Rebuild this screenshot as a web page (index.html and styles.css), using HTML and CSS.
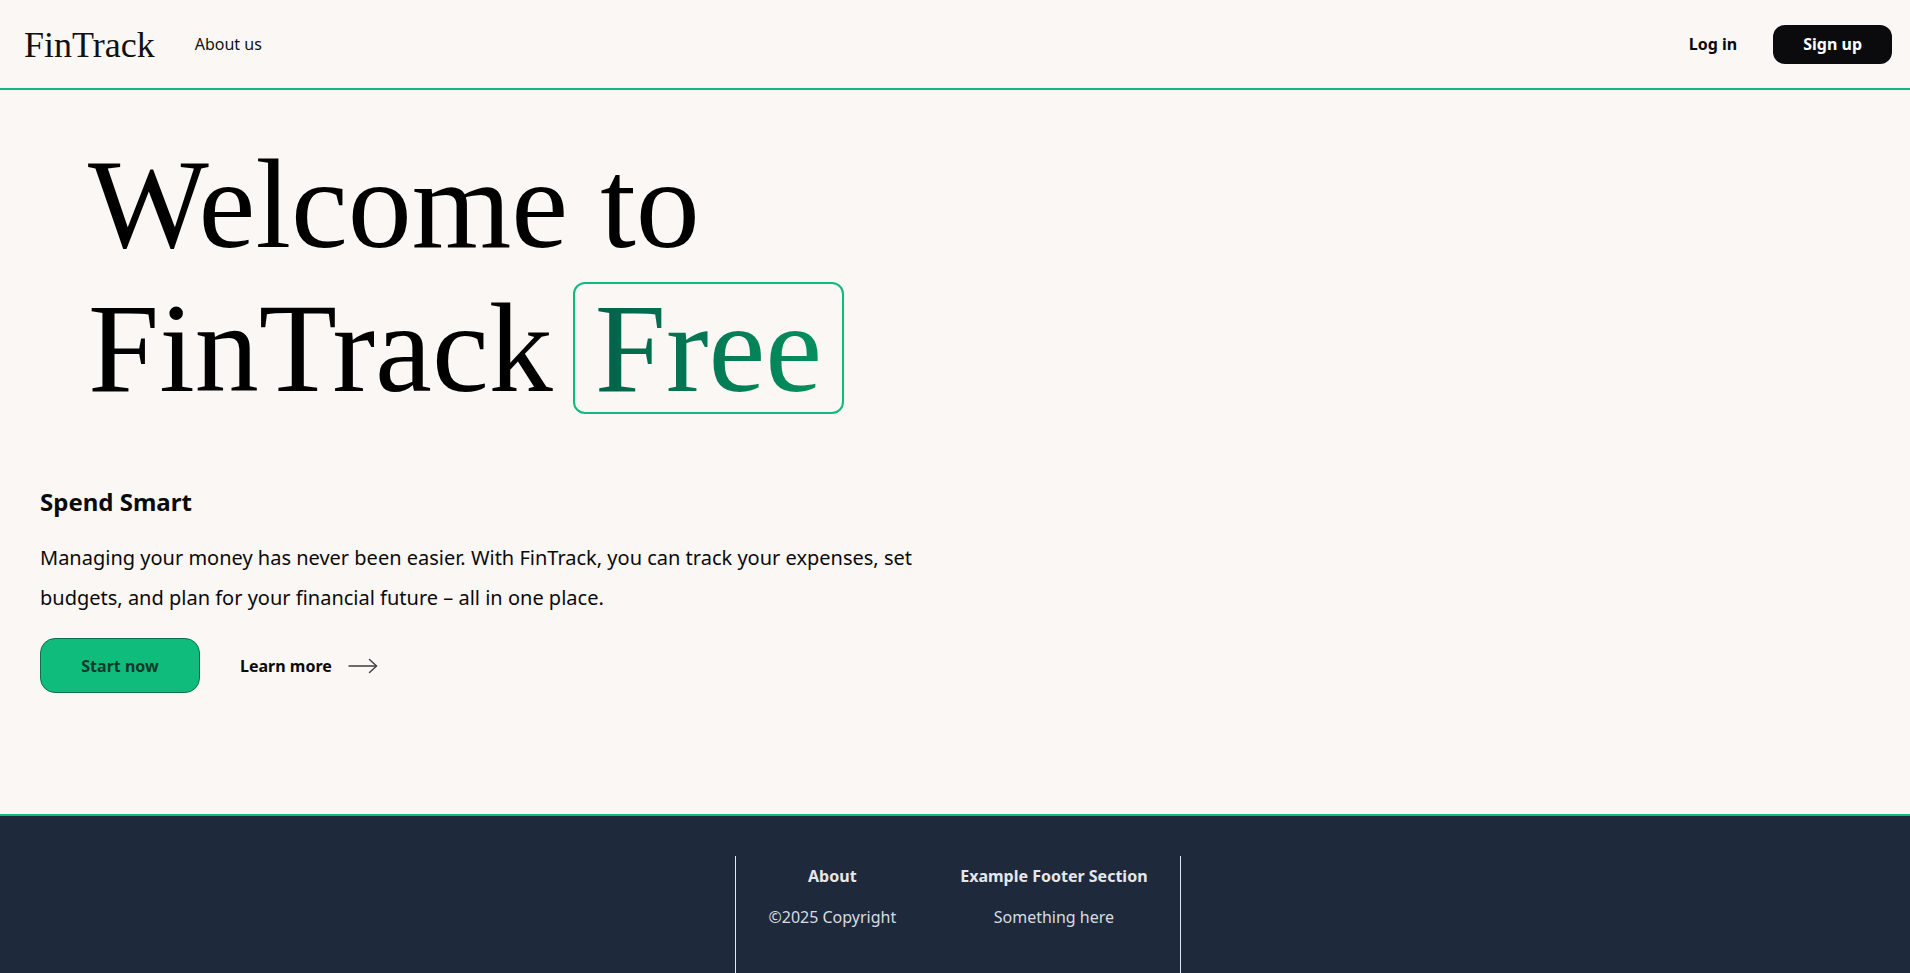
FILE: index.html
```html
<!DOCTYPE html>
<html lang="en">
<head>
<meta charset="utf-8">
<title>FinTrack</title>
<link rel="stylesheet" href="styles.css">
</head>
<body>
<header class="topbar">
  <div class="topbar-left">
    <a class="logo" href="#">FinTrack</a>
    <a class="nav-link" href="#">About us</a>
  </div>
  <div class="topbar-right">
    <a class="login" href="#">Log in</a>
    <a class="signup" href="#">Sign up</a>
  </div>
</header>
<main class="hero">
  <h1 class="hero-title">Welcome to<br>FinTrack <span class="free-box"><span class="free-text">Free</span></span></h1>
  <h2 class="hero-sub">Spend Smart</h2>
  <p class="hero-copy">Managing your money has never been easier. With FinTrack, you can track your expenses, set budgets, and plan for your financial future – all in one place.</p>
  <div class="actions">
    <a class="btn-start" href="#">Start now</a>
    <a class="btn-learn" href="#">Learn more
      <svg class="arrow" width="30" height="16" viewBox="0 0 30 16" fill="none" stroke="#3f3f3f" stroke-width="1.4" stroke-linecap="round" stroke-linejoin="round"><path d="M1 8 H28.5"/><path d="M21.5 1.5 L28.5 8 L21.5 14.5"/></svg>
    </a>
  </div>
</main>
<footer class="footer">
  <div class="footer-inner">
    <div class="footer-col">
      <h3 class="footer-head">About</h3>
      <p class="footer-text">©2025 Copyright</p>
    </div>
    <div class="footer-col">
      <h3 class="footer-head">Example Footer Section</h3>
      <p class="footer-text">Something here</p>
    </div>
  </div>
</footer>
</body>
</html>
```

FILE: styles.css
```css
* { box-sizing: border-box; }

html, body {
  margin: 0;
  padding: 0;
}

body {
  background: #faf7f4;
  color: #0a0a0a;
  font-family: "Noto Sans", "Open Sans", sans-serif;
}

a { text-decoration: none; color: inherit; }

.topbar {
  height: 90px;
  display: flex;
  align-items: center;
  justify-content: space-between;
  padding: 0 18px 0 24px;
  border-bottom: 2px solid #10b981;
}

.topbar-left {
  display: flex;
  align-items: center;
  gap: 40px;
}

.logo {
  font-family: "Liberation Serif", "Times New Roman", serif;
  font-size: 36px;
  line-height: 40px;
  color: #111;
  padding-top: 2px;
}

.nav-link {
  font-size: 16px;
  line-height: 24px;
  color: #111;
}

.topbar-right {
  display: flex;
  align-items: center;
  gap: 36px;
}

.login {
  font-weight: 700;
  font-size: 16px;
  line-height: 24px;
  color: #0a0a0a;
}

.signup {
  background: #0b0b0d;
  color: #fff;
  font-weight: 700;
  font-size: 16px;
  line-height: 25px;
  padding: 7px 30px;
  border-radius: 12px;
}

.hero {
  padding: 42px 40px 121px;
}

.hero-title {
  margin: 0;
  padding-left: 48px;
  font-family: "Liberation Serif", "Times New Roman", serif;
  font-weight: 400;
  font-size: 128px;
  line-height: 144px;
  color: #000;
}

.free-box {
  display: inline-block;
  margin-left: -12px;
  line-height: 1;
  border: 2px solid #10b981;
  border-radius: 12px;
  padding: 0 20px;
}

.free-text {
  background: linear-gradient(90deg, #03624a 0%, #04905f 100%);
  -webkit-background-clip: text;
  background-clip: text;
  color: transparent;
}

.hero-sub {
  margin: 66px 0 20px;
  font-size: 24px;
  line-height: 32px;
  font-weight: 700;
}

.hero-copy {
  margin: 0 0 20px;
  max-width: 900px;
  font-size: 20px;
  line-height: 40px;
}

.actions {
  display: flex;
  align-items: center;
  gap: 40px;
}

.btn-start {
  display: inline-flex;
  align-items: center;
  justify-content: center;
  width: 160px;
  height: 55px;
  background: #10bc7c;
  border: 1px solid #0c6f4f;
  border-radius: 15px;
  font-weight: 700;
  font-size: 16px;
  color: #10392b;
}

.btn-learn {
  display: inline-flex;
  align-items: center;
  gap: 16px;
  font-weight: 700;
  font-size: 16px;
  color: #0a0a0a;
}

.arrow { display: block; }

.footer {
  background: #1e293b;
  border-top: 2px solid #10b981;
  padding: 40px 0 0 6px;
  display: flex;
  justify-content: center;
}

.footer-inner {
  display: flex;
  border-left: 1px solid #e2e8f0;
  border-right: 1px solid #e2e8f0;
}

.footer-col {
  padding: 8px 32px 100px;
  text-align: center;
}

.footer-head {
  margin: 0;
  font-size: 16px;
  line-height: 24px;
  font-weight: 700;
  color: #e5e7eb;
}

.footer-text {
  margin: 17px 0 0;
  font-size: 16px;
  line-height: 24px;
  color: #d8dce2;
}
```
